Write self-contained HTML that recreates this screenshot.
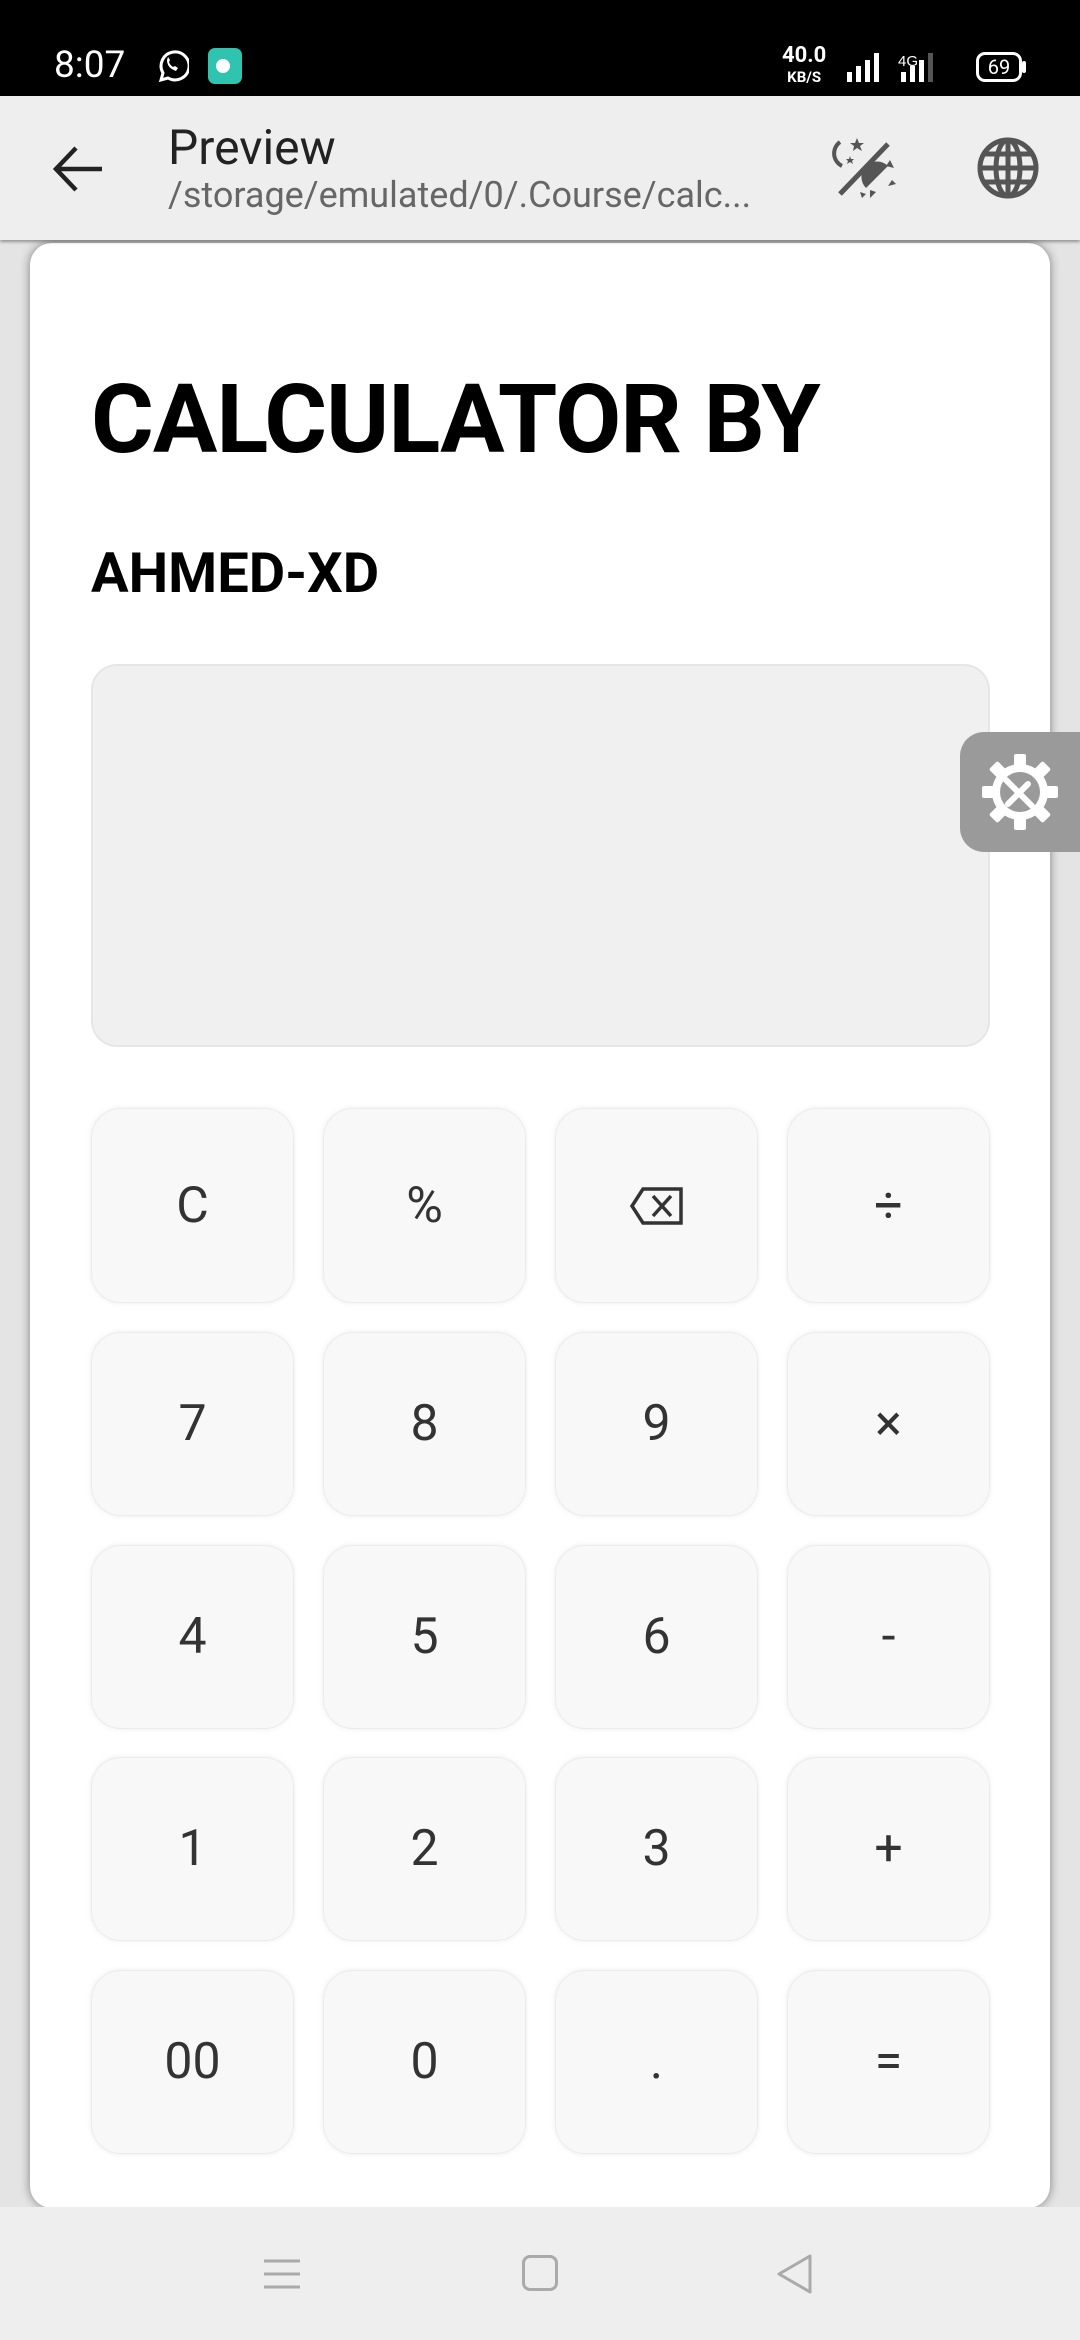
<!DOCTYPE html>
<html><head><meta charset="utf-8"><style>
*{margin:0;padding:0;box-sizing:border-box}
body{width:1080px;height:2340px;overflow:hidden;background:#e4e4e4;font-family:"Roboto","Liberation Sans",sans-serif;position:relative}
.sb{position:absolute;left:0;top:0;width:1080px;height:96px;background:#000;color:#fff}
.tb{position:absolute;left:0;top:96px;width:1080px;height:144px;background:#eeeeee;box-shadow:0 2px 3px rgba(0,0,0,.35);z-index:2}
.card{position:absolute;left:30px;top:243px;width:1020px;height:1965px;background:#fff;border-radius:22px;box-shadow:0 0 10px rgba(0,0,0,.45)}
.h1{position:absolute;left:91px;top:364px;font-size:96px;font-weight:bold;color:#000;letter-spacing:-1px}
.h2{position:absolute;left:91px;top:540px;font-size:56px;font-weight:bold;color:#000}
.disp{position:absolute;left:91px;top:664px;width:899px;height:383px;background:#f0f0f0;border:2px solid #e6e6e6;border-radius:26px}
.btn{position:absolute;width:203px;background:#f8f8f8;border:1px solid #ececec;border-radius:30px;box-shadow:0 0 6px rgba(0,0,0,.08);display:flex;align-items:center;justify-content:center;font-size:50px;color:#333}
.nav{position:absolute;left:0;top:2207px;width:1080px;height:133px;background:#eeeeee}
</style></head><body>
<div class="sb">
<div style="position:absolute;left:54px;top:44px;font-size:37px;">8:07</div>
<svg style="position:absolute;left:155px;top:48px" width="34" height="36" viewBox="0 0 34 36"><path d="M6 32 L8 25 A14 14 0 1 1 13 30 Z" fill="none" stroke="#fff" stroke-width="3"/><path d="M12 12 q0 8 9 11 l2-3 -3-2 -2 1 q-3-2-4-5 l1-2 -2-3z" fill="#fff"/></svg>
<div style="position:absolute;left:208px;top:48px;width:34px;height:36px;background:#2ec4b0;border-radius:7px"><div style="position:absolute;left:8px;top:11px;width:14px;height:14px;border-radius:50%;background:#fff"></div></div>
<div style="position:absolute;left:782px;top:46px;font-size:22px;font-weight:bold;line-height:20px;text-align:center">40.0<br><span style="font-size:15px">KB/S</span></div>
<svg style="position:absolute;left:845px;top:50px" width="110" height="34"><rect x="2" y="22" width="5" height="10" fill="#fff"/><rect x="11" y="16" width="5" height="16" fill="#fff"/><rect x="20" y="10" width="5" height="22" fill="#fff"/><rect x="29" y="3" width="5" height="29" fill="#fff"/><text x="53" y="16" fill="#fff" font-size="15" font-family="Liberation Sans">4G</text><rect x="56" y="22" width="5" height="10" fill="#fff"/><rect x="65" y="16" width="5" height="16" fill="#fff"/><rect x="74" y="10" width="5" height="22" fill="#fff"/><rect x="83" y="3" width="5" height="29" fill="#555"/></svg>
<div style="position:absolute;left:976px;top:52px;width:46px;height:30px;border:3px solid #fff;border-radius:9px;font-size:20px;text-align:center;line-height:24px">69</div>
<div style="position:absolute;left:1022px;top:61px;width:4px;height:12px;background:#fff;border-radius:2px"></div>
</div>
<div class="tb">
<svg style="position:absolute;left:52px;top:48px" width="52" height="50" viewBox="0 0 52 50"><path d="M50 25 H6 M24 4 L4 25 L24 46" fill="none" stroke="#222" stroke-width="4.5"/></svg>
<div style="position:absolute;left:168px;top:23px;font-size:48px;color:#222">Preview</div>
<div style="position:absolute;left:168px;top:78px;font-size:36px;color:#666">/storage/emulated/0/.Course/calc...</div>
<svg style="position:absolute;left:832px;top:40px" width="66" height="64" viewBox="0 0 66 64"><path d="M8 6 A14 14 0 0 0 10 30" fill="none" stroke="#555" stroke-width="4"/><path d="M25 2l2 5 5 0-4 3 2 5-5-3-4 3 1-5-4-3 5 0z" fill="#555"/><path d="M18 20l1 3 3 0-2 2 1 3-3-2-3 2 1-3-2-2 3 0z" fill="#555"/><path d="M56 8 L8 58" stroke="#555" stroke-width="5"/><path d="M34 52 A14 14 0 0 1 56 30 Z" fill="#555"/><path d="M58 24l4 8-8-2zM60 44l4 4-8 2zM44 56l-6 6 0-8zM30 62l-2-6 6 2z" fill="#555"/></svg>
<svg style="position:absolute;left:976px;top:40px" width="64" height="64" viewBox="0 0 64 64"><g fill="none" stroke="#555" stroke-width="5"><circle cx="32" cy="32" r="28"/><ellipse cx="32" cy="32" rx="12" ry="28"/><line x1="32" y1="4" x2="32" y2="60"/><line x1="4" y1="32" x2="60" y2="32"/><line x1="8" y1="18" x2="56" y2="18"/><line x1="8" y1="46" x2="56" y2="46"/></g></svg>
</div>
<div class="card"></div>
<div class="h1">CALCULATOR BY</div>
<div class="h2">AHMED-XD</div>
<div class="disp"></div>

<div class="btn" style="left:91px;top:1108px;height:195px">C</div>
<div class="btn" style="left:323px;top:1108px;height:195px">%</div>
<div class="btn" style="left:555px;top:1108px;height:195px"><svg width="56" height="40" viewBox="0 0 56 40"><path d="M14 3 H52 V37 H14 L3 20 Z" fill="none" stroke="#333" stroke-width="3.5"/><path d="M24 10 L42 30 M42 10 L24 30" stroke="#333" stroke-width="3.5"/></svg></div>
<div class="btn" style="left:787px;top:1108px;height:195px">÷</div>

<div class="btn" style="left:91px;top:1332px;height:184px">7</div>
<div class="btn" style="left:323px;top:1332px;height:184px">8</div>
<div class="btn" style="left:555px;top:1332px;height:184px">9</div>
<div class="btn" style="left:787px;top:1332px;height:184px">×</div>

<div class="btn" style="left:91px;top:1545px;height:184px">4</div>
<div class="btn" style="left:323px;top:1545px;height:184px">5</div>
<div class="btn" style="left:555px;top:1545px;height:184px">6</div>
<div class="btn" style="left:787px;top:1545px;height:184px">-</div>

<div class="btn" style="left:91px;top:1757px;height:184px">1</div>
<div class="btn" style="left:323px;top:1757px;height:184px">2</div>
<div class="btn" style="left:555px;top:1757px;height:184px">3</div>
<div class="btn" style="left:787px;top:1757px;height:184px">+</div>

<div class="btn" style="left:91px;top:1970px;height:184px">00</div>
<div class="btn" style="left:323px;top:1970px;height:184px">0</div>
<div class="btn" style="left:555px;top:1970px;height:184px">.</div>
<div class="btn" style="left:787px;top:1970px;height:184px">=</div>

<div style="position:absolute;left:960px;top:732px;width:120px;height:120px;background:#9a9a9a;border-radius:24px 0 0 24px;display:flex;align-items:center;justify-content:center">
<svg width="80" height="80" viewBox="0 0 80 80"><g fill="#fff"><circle cx="40" cy="40" r="28"/><g><rect x="34" y="2" width="12" height="14" rx="2"/><rect x="34" y="64" width="12" height="14" rx="2"/><rect x="2" y="34" width="14" height="12" rx="2"/><rect x="64" y="34" width="14" height="12" rx="2"/><rect x="34" y="2" width="12" height="14" rx="2" transform="rotate(45 40 40)"/><rect x="34" y="64" width="12" height="14" rx="2" transform="rotate(45 40 40)"/><rect x="2" y="34" width="14" height="12" rx="2" transform="rotate(45 40 40)"/><rect x="64" y="34" width="14" height="12" rx="2" transform="rotate(45 40 40)"/></g></g><circle cx="40" cy="40" r="20" fill="#9a9a9a"/><path d="M28 52 L48 32 M26 28 L52 54" stroke="#fff" stroke-width="6" stroke-linecap="round"/></svg></div>

<div class="nav">
<svg style="position:absolute;left:262px;top:50px" width="40" height="34"><g stroke="#aaa" stroke-width="3"><line x1="2" y1="4" x2="38" y2="4"/><line x1="2" y1="17" x2="38" y2="17"/><line x1="2" y1="30" x2="38" y2="30"/></g></svg>
<div style="position:absolute;left:522px;top:48px;width:36px;height:36px;border:3px solid #aaa;border-radius:8px"></div>
<svg style="position:absolute;left:774px;top:46px" width="40" height="42"><path d="M36 3 L5 21 L36 39 Z" fill="none" stroke="#aaa" stroke-width="3" stroke-linejoin="round"/></svg>
</div>
</body></html>
